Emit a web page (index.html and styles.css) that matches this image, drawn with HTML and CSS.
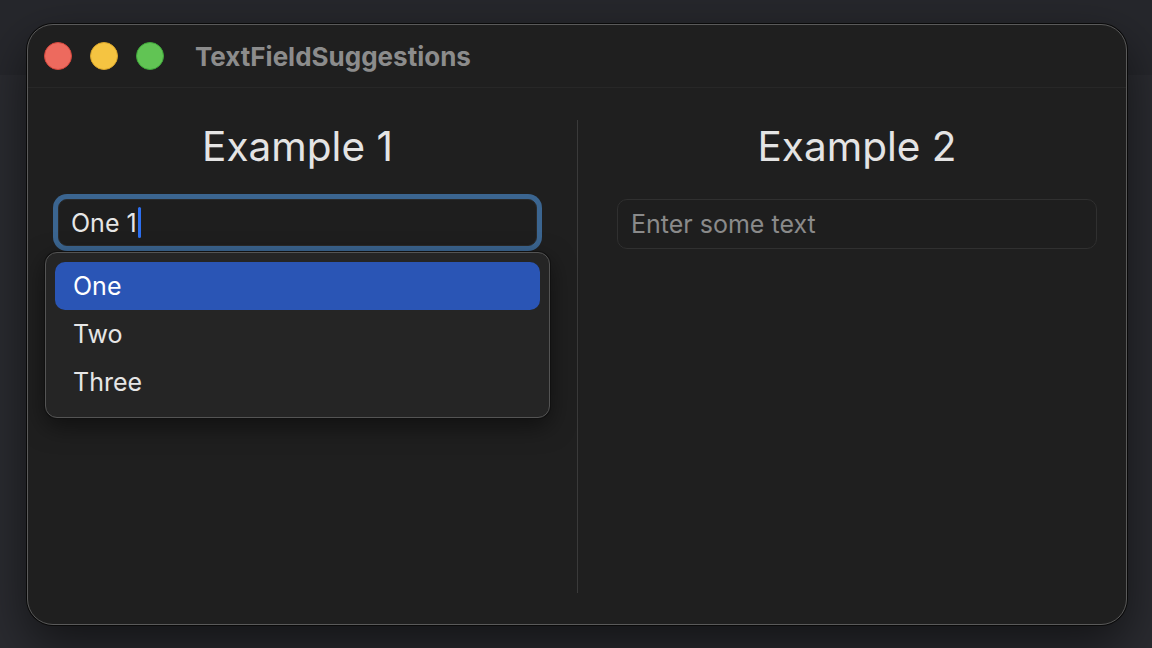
FILE: index.html
```html
<!DOCTYPE html>
<html lang="en">

<head>
    <meta charset="UTF-8">
    <meta name="viewport" content="width=device-width, initial-scale=1.0">
    <title>TextFieldSuggestions</title>
    <link rel="stylesheet" href="styles.css">
</head>

<body>

    <div class="window">
        <div class="title-bar">
            <div class="lights">
                <span class="light red"></span>
                <span class="light yellow"></span>
                <span class="light green"></span>
            </div>
            <div class="title">TextFieldSuggestions</div>
        </div>

        <div class="columns">
            <!-- Example 1: field with suggestion popup -->
            <div class="column left">
                <h2>Example 1</h2>
                <div class="field focused">One 1<span class="caret"></span></div>

                <div class="suggestions">
                    <div class="item selected">One</div>
                    <div class="item">Two</div>
                    <div class="item">Three</div>
                </div>
            </div>

            <div class="divider"></div>

            <!-- Example 2 -->
            <div class="column right">
                <h2>Example 2</h2>
                <input class="field" type="text" placeholder="Enter some text">
            </div>
        </div>
    </div>

</body>

</html>
```

FILE: styles.css
```css
body, html {
    margin: 0;
    padding: 0;
    height: 100%;
    overflow: hidden;
    font-family: Inter, "Noto Sans", sans-serif;
    background: linear-gradient(#26272c 0, #26272c 75px, #2a2b30 75px, #2a2b30 100%);
}

body {
    padding: 24px 0 0 27px;
    box-sizing: border-box;
}

.window {
    width: 1100px;
    height: 601px;
    box-sizing: border-box;
    background-color: #1f1f1f;
    border: 1px solid #5a5a5a;
    border-radius: 26px;
    box-shadow: 0 0 0 1px #0a0a0a, 0 20px 50px rgba(0, 0, 0, 0.55);
    display: flex;
    flex-direction: column;
    overflow: hidden;
}

.title-bar {
    height: 62px;
    flex-shrink: 0;
    display: flex;
    align-items: center;
    padding-left: 16px;
    border-bottom: 1px solid #272727;
}

.lights {
    display: flex;
    gap: 18px;
}

.light {
    width: 28px;
    height: 28px;
    border-radius: 50%;
    box-sizing: border-box;
}

.light.red {
    background-color: #ed6a5e;
    border: 1px solid #d3473d;
}

.light.yellow {
    background-color: #f5c441;
    border: 1px solid #d8a42a;
}

.light.green {
    background-color: #61c454;
    border: 1px solid #3fa83a;
}

.title {
    margin-left: 31px;
    font-size: 26px;
    font-weight: 700;
    color: #8c8c8c;
}

.columns {
    flex: 1;
    display: flex;
}

.column {
    position: relative;
    padding-top: 36px;
    box-sizing: border-box;
}

.column.left {
    width: 549px;
    padding-left: 30px;
    padding-right: 40px;
}

.column.right {
    flex: 1;
    padding-left: 39px;
    padding-right: 29px;
}

.divider {
    width: 1px;
    background-color: #3a3a3a;
    margin: 32px 0 31px;
}

h2 {
    margin: 0 0 29px;
    font-size: 40.5px;
    font-weight: 400;
    line-height: 46px;
    color: #e4e4e4;
    text-align: center;
}

.field {
    display: flex;
    align-items: center;
    width: 100%;
    height: 50px;
    box-sizing: border-box;
    padding: 0 13px;
    border: 1px solid #303030;
    border-radius: 10px;
    background-color: #1e1e1e;
    font-family: inherit;
    font-size: 25px;
    color: #e6e6e6;
    outline: none;
}

.field::placeholder {
    color: #8a8a8a;
}

.field.focused {
    height: 47px;
    margin-top: 1px;
    padding: 0 12px;
    border-color: #2a2a2a;
    border-radius: 9px;
    box-shadow: 0 0 0 5px #3b6590;
}

.caret {
    width: 3px;
    height: 31px;
    margin-left: 1px;
    border-radius: 2px;
    background-color: #2d6ff0;
}

.suggestions {
    position: absolute;
    left: 17px;
    top: 164px;
    width: 505px;
    box-sizing: border-box;
    padding: 9px 9px 11px;
    background-color: #252525;
    border: 1.5px solid #545454;
    border-radius: 12px;
    box-shadow: 0 0 0 1px #111, 0 8px 24px rgba(0, 0, 0, 0.5);
}

.item {
    height: 48px;
    line-height: 48px;
    padding-left: 18px;
    border-radius: 10px;
    font-size: 25px;
    color: #e6e6e6;
}

.item.selected {
    background-color: #2a55b5;
    color: #ffffff;
}
```
